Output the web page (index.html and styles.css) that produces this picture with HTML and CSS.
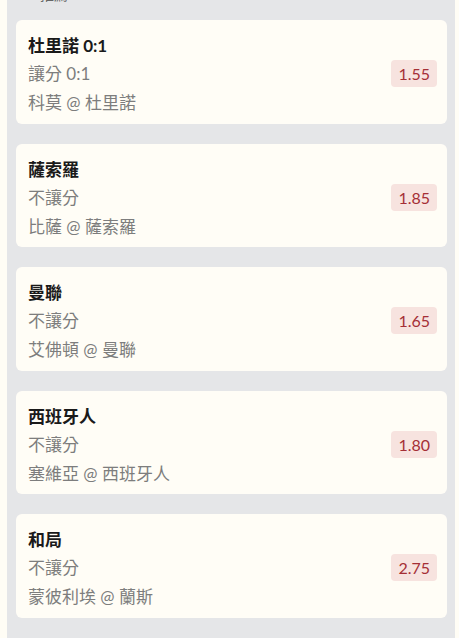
FILE: index.html
```html
<!DOCTYPE html>
<html lang="zh-Hant">
<head>
    <meta charset="UTF-8">
    <meta name="viewport" content="width=device-width, initial-scale=1.0">
    <title>投注單</title>
    <link rel="stylesheet" href="styles.css">
</head>
<body>
    <div class="panel">
        <h3 class="panel-title">推薦</h3>

        <div class="pick">
            <div class="pick-info">
                <div class="pick-name">杜里諾 0:1</div>
                <div class="pick-line">讓分 0:1</div>
                <div class="pick-match">科莫 @ 杜里諾</div>
            </div>
            <span class="odds">1.55</span>
        </div>

        <div class="pick">
            <div class="pick-info">
                <div class="pick-name">薩索羅</div>
                <div class="pick-line">不讓分</div>
                <div class="pick-match">比薩 @ 薩索羅</div>
            </div>
            <span class="odds">1.85</span>
        </div>

        <div class="pick">
            <div class="pick-info">
                <div class="pick-name">曼聯</div>
                <div class="pick-line">不讓分</div>
                <div class="pick-match">艾佛頓 @ 曼聯</div>
            </div>
            <span class="odds">1.65</span>
        </div>

        <div class="pick">
            <div class="pick-info">
                <div class="pick-name">西班牙人</div>
                <div class="pick-line">不讓分</div>
                <div class="pick-match">塞維亞 @ 西班牙人</div>
            </div>
            <span class="odds">1.80</span>
        </div>

        <div class="pick">
            <div class="pick-info">
                <div class="pick-name">和局</div>
                <div class="pick-line">不讓分</div>
                <div class="pick-match">蒙彼利埃 @ 蘭斯</div>
            </div>
            <span class="odds">2.75</span>
        </div>
    </div>
</body>
</html>
```

FILE: styles.css
```css
body {
    font-family: "Lato", "Noto Sans CJK TC", sans-serif;
    background-color: #fffdf5;
    color: #1a1a1a;
    margin: 0;
    padding: 0 4px 0 7px;
    overflow: hidden;
}

.panel {
    background-color: #e5e6e8;
    padding: 0 8px 20px 9px;
}

.panel-title {
    margin: -12px 0 0 24px;
    height: 14px;
    font-size: 14px;
    line-height: 14px;
    color: #666;
    font-weight: normal;
}

.pick {
    display: flex;
    align-items: center;
    justify-content: space-between;
    background-color: #fffdf6;
    border-radius: 6px;
    padding: 13px 10px 6.5px 12px;
    margin-top: 18px;
    margin-bottom: 20px;
}

.pick + .pick {
    margin-top: 0;
}

.pick-name {
    font-size: 17px;
    font-weight: bold;
    line-height: 26px;
}

.pick-line,
.pick-match {
    font-size: 17px;
    line-height: 29px;
    color: #7d7d7d;
}

.odds {
    display: inline-block;
    background-color: #f7e3df;
    color: #a52f36;
    font-size: 16px;
    padding: 3px 7px;
    margin-bottom: 3px;
    border-radius: 4px;
    line-height: 21px;
}
```
